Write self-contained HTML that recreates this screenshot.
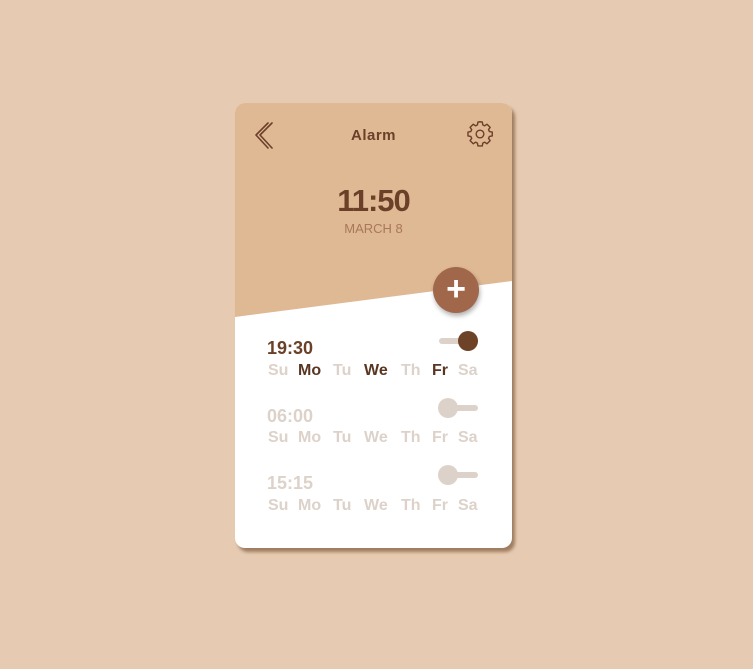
<html><head><style>
body{margin:0;width:753px;height:669px;background:#e6cbb2;font-family:"Liberation Sans",sans-serif;position:relative;overflow:hidden}
.card{position:absolute;left:235px;top:103px;width:277px;height:445px;border-radius:10px;background:#fff;overflow:hidden;box-shadow:3px 4px 3px rgba(100,60,30,.55)}
.top{position:absolute;left:0;top:0;width:277px;height:214px;background:#dfb894;clip-path:polygon(0 0,100% 0,100% 178px,0 214px)}
.a{position:absolute}
.t{font-weight:bold;font-size:18px;color:#6b4029}
.d{position:absolute;font-weight:bold;font-size:16px;color:#ddd2c9}
.on{color:#5a3622}
.trk{position:absolute;width:39px;height:6px;border-radius:3px;background:#ddd2c9}
.kn{position:absolute;width:20px;height:20px;border-radius:50%;background:#ddd2c9}
</style></head><body>
<div class="card">
<div class="top"></div>
<svg class="a" style="left:20px;top:18px" width="22" height="30" viewBox="0 0 22 30"><path d="M17 2 L5 14 L17 27 M13 2 L1 14 L13 27" fill="none" stroke="#6b4029" stroke-width="1.6" stroke-linejoin="round" stroke-linecap="round"/></svg>
<div class="a" style="left:0;width:277px;top:24px;text-align:center;font-weight:bold;font-size:15px;color:#6b4029;letter-spacing:.5px">Alarm</div>
<svg class="a" style="left:231px;top:17px" width="28" height="28" viewBox="0 0 24 24"><path d="M12 1.5l2 .3.4 2.4 1.6.8 2-1.4 2.7 2.7-1.4 2 .8 1.6 2.4.4v3.4l-2.4.4-.8 1.6 1.4 2-2.7 2.7-2-1.4-1.6.8-.4 2.4h-3.8l-.4-2.4-1.6-.8-2 1.4-2.7-2.7 1.4-2-.8-1.6-2.4-.4v-3.4l2.4-.4.8-1.6-1.4-2 2.7-2.7 2 1.4 1.6-.8.4-2.4z" fill="none" stroke="#6b4029" stroke-width="1.2" stroke-linejoin="round"/><circle cx="12" cy="12" r="3.3" fill="none" stroke="#6b4029" stroke-width="1.2"/></svg>
<div class="a" style="left:0;width:277px;top:80px;text-align:center;font-weight:bold;font-size:31px;color:#6b4029;letter-spacing:-1px">11:50</div>
<div class="a" style="left:0;width:277px;top:118px;text-align:center;font-size:13px;color:#a87858">MARCH 8</div>
<div class="a" style="left:198px;top:164px;width:46px;height:46px;border-radius:50%;background:#a0674a;box-shadow:1px 3px 5px rgba(0,0,0,.3);color:#fff;font-size:34px;line-height:44px;text-align:center;font-weight:bold">+</div>

<div class="a t" style="left:32px;top:235px">19:30</div>
<div class="trk" style="left:204px;top:235px"></div><div class="kn" style="left:223px;top:228px;background:#6e4226"></div>
<div class="a t" style="left:32px;top:303px;color:#ddd2c9">06:00</div>
<div class="trk" style="left:204px;top:302px"></div><div class="kn" style="left:203px;top:295px"></div>
<div class="a t" style="left:32px;top:370px;color:#ddd2c9">15:15</div>
<div class="trk" style="left:204px;top:369px"></div><div class="kn" style="left:203px;top:362px"></div>
</div>
<div id="rows"></div>
<script>
var xs=[268,298,333,364,401,432,458],n=["Su","Mo","Tu","We","Th","Fr","Sa"],ys=[362,429,497],h="";
ys.forEach(function(y,r){xs.forEach(function(x,i){var on=r==0&&(i==1||i==3||i==5);h+='<div class="d'+(on?' on':'')+'" style="left:'+x+'px;top:'+y+'px">'+n[i]+'</div>';});});
document.getElementById("rows").innerHTML=h;
</script>
</body></html>
